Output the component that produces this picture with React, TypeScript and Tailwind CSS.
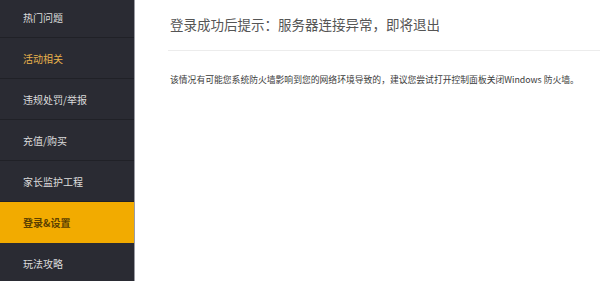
import React from "react";

const items = ["热门问题", "活动相关", "违规处罚/举报", "充值/购买", "家长监护工程", "登录&设置", "玩法攻略"];

export default function App() {
  return (
    <div
      className="flex w-[600px] h-[281px] overflow-hidden bg-white"
      style={{ fontFamily: '"Noto Sans CJK SC", "Noto Sans", sans-serif' }}
    >
      <div className="w-[135px] shrink-0 bg-[#2a2b33] border-r border-[#9a9ba3] flex flex-col">
        <div className="-mt-[3px] flex flex-col">
          {items.map((t, i) => {
            const active = i === 5;
            const hot = i === 1;
            return (
              <div
                key={t}
                className={
                  "h-[41px] shrink-0 flex items-center pl-[23px] text-[10px] border-b " +
                  (active
                    ? "bg-[#f2ab00] border-[#f2ab00] text-[#5c4100] font-bold"
                    : hot
                    ? "border-[#202127] text-[#e7b24c]"
                    : "border-[#202127] text-[#dcdcdc]")
                }
              >
                {t}
              </div>
            );
          })}
        </div>
      </div>
      <div className="flex-1 flex flex-col pl-[33px]">
        <div className="h-[51px] flex items-center pl-[2px] pb-[1px] text-[13.5px] text-[#555555] border-b border-[#ececec]">
          登录成功后提示：服务器连接异常，即将退出
        </div>
        <div className="mt-[23px] pl-[2px] text-[8.8px] leading-[12px] text-[#3a3a3a]">
          该情况有可能您系统防火墙影响到您的网络环境导致的，建议您尝试打开控制面板关闭Windows 防火墙。
        </div>
      </div>
    </div>
  );
}
